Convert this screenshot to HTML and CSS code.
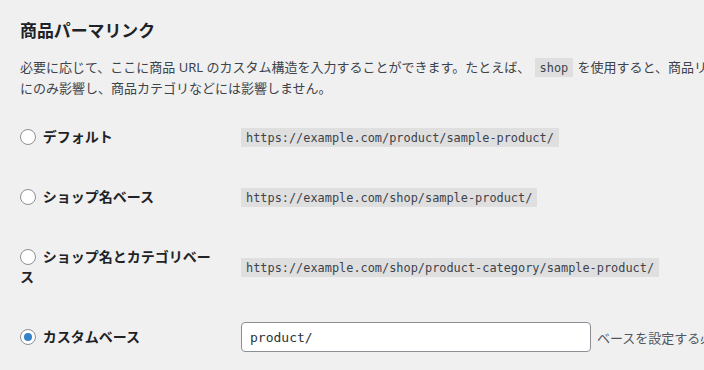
FILE: index.html
```html
<!DOCTYPE html>
<html lang="ja">
  <head>
    <meta charset="utf-8" />
    <meta name="viewport" content="width=device-width, initial-scale=1.0" />
    <link rel="stylesheet" href="styles.css">
  </head>

  <body>
    <div class="wrap">
      <h2 class="section-title">商品パーマリンク</h2>
      <p class="section-desc">
        必要に応じて、ここに商品 URL のカスタム構造を入力することができます。たとえば、 <code>shop</code> を使用すると、商品リンクは <code>https://example.com/shop/sample-product/</code> のようになります。この設定は商品 URL<br />にのみ影響し、商品カテゴリなどには影響しません。
      </p>

      <table class="form-table">
        <tr>
          <th><label><input type="radio" name="product_base" class="radio" /> デフォルト</label></th>
          <td><code>https://example.com/product/sample-product/</code></td>
        </tr>
        <tr>
          <th><label><input type="radio" name="product_base" class="radio" /> ショップ名ベース</label></th>
          <td><code>https://example.com/shop/sample-product/</code></td>
        </tr>
        <tr>
          <th><label><input type="radio" name="product_base" class="radio" /> ショップ名とカテゴリベース</label></th>
          <td><code>https://example.com/shop/product-category/sample-product/</code></td>
        </tr>
        <tr>
          <th><label><input type="radio" name="product_base" class="radio" checked /> カスタムベース</label></th>
          <td>
            <div class="custom-base">
              <input type="text" class="regular-text" value="product/" />
              <span class="description">ベースを設定する必要があります。</span>
            </div>
          </td>
        </tr>
      </table>
    </div>
  </body>
</html>
```

FILE: styles.css
```css
html,
body {
  margin: 0;
  background: #f0f0f1;
  overflow: hidden;
}

body {
  color: #3c434a;
  font-family: "Noto Sans", "Noto Sans CJK JP", sans-serif;
  font-size: 13px;
}

.wrap {
  width: 1200px;
  padding: 0 20px;
}

.section-title {
  margin: 19px 0 14px;
  font-size: 16.9px;
  font-weight: 600;
  line-height: 24px;
  color: #1d2327;
}

.section-desc {
  margin: 0 0 9px;
  line-height: 20px;
  white-space: nowrap;
}

code {
  font-family: "DejaVu Sans Mono", monospace;
  font-size: 11.9px;
  padding: 3px 5px 2px;
  margin: 0 1px;
  background: rgba(0, 0, 0, 0.07);
}

/*settings rows*/
.form-table {
  border-collapse: collapse;
}

.form-table th {
  width: 200px;
  padding: 20px 10px 20px 0;
  vertical-align: top;
  text-align: left;
  font-size: 14px;
  font-weight: 600;
  line-height: 20px;
  color: #1d2327;
}

.form-table td {
  padding: 15px 10px;
  vertical-align: middle;
  white-space: nowrap;
}

.radio {
  appearance: none;
  display: inline-block;
  width: 16px;
  height: 16px;
  margin: 0 3px 0 0;
  vertical-align: -3px;
  border: 1px solid #8c8f94;
  border-radius: 50%;
  background: #fff;
  box-sizing: border-box;
  position: relative;
}

.radio:checked::before {
  content: "";
  position: absolute;
  top: 3px;
  left: 3px;
  width: 8px;
  height: 8px;
  border-radius: 50%;
  background: #3582c4;
}

.custom-base {
  display: flex;
  align-items: center;
  gap: 6px;
}

.regular-text {
  width: 350px;
  height: 30px;
  box-sizing: border-box;
  margin: 0 0 0 1px;
  padding: 0 8px;
  border: 1px solid #8c8f94;
  border-radius: 4px;
  background: #fff;
  color: #2c3338;
  font-family: "DejaVu Sans Mono", monospace;
  font-size: 13px;
}

.description {
  font-size: 13px;
  color: #50575e;
}
```
